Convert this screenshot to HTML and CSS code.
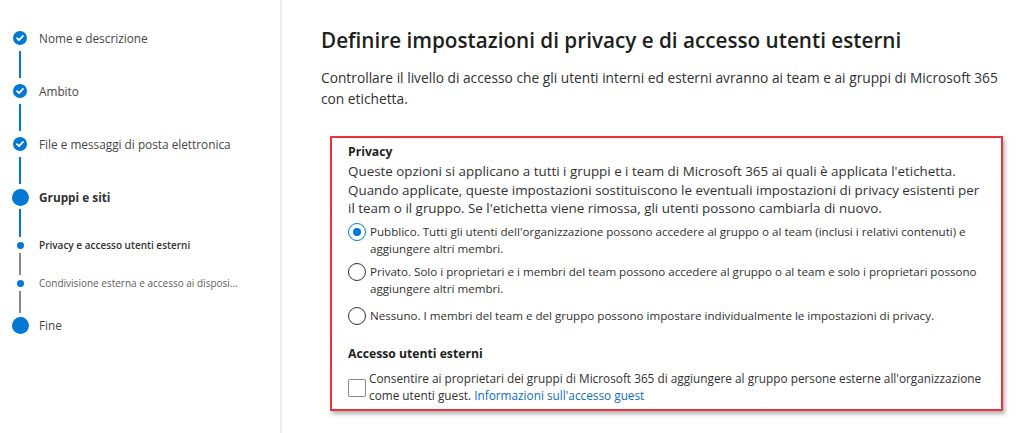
FILE: index.html
```html
<!DOCTYPE html>
<html lang="it">
<head>
    <meta charset="UTF-8">
    <title>Definire impostazioni di privacy e di accesso utenti esterni</title>
    <link rel="stylesheet" href="styles.css">
</head>
<body>
    <div class="page">
        <nav class="wizard">
            <div class="step done">
                <span class="marker"><span class="check-dot"><svg viewBox="0 0 14 14" width="14" height="14"><path d="M4 7.2l2 2 4-4.3" fill="none" stroke="#fff" stroke-width="1.8" stroke-linecap="round" stroke-linejoin="round"/></svg></span></span>
                <span class="label">Nome e descrizione</span>
            </div>
            <div class="line line-lg"></div>
            <div class="step done">
                <span class="marker"><span class="check-dot"><svg viewBox="0 0 14 14" width="14" height="14"><path d="M4 7.2l2 2 4-4.3" fill="none" stroke="#fff" stroke-width="1.8" stroke-linecap="round" stroke-linejoin="round"/></svg></span></span>
                <span class="label">Ambito</span>
            </div>
            <div class="line line-lg"></div>
            <div class="step done">
                <span class="marker"><span class="check-dot"><svg viewBox="0 0 14 14" width="14" height="14"><path d="M4 7.2l2 2 4-4.3" fill="none" stroke="#fff" stroke-width="1.8" stroke-linecap="round" stroke-linejoin="round"/></svg></span></span>
                <span class="label">File e messaggi di posta elettronica</span>
            </div>
            <div class="line line-lg"></div>
            <div class="step current">
                <span class="marker"><span class="big-dot"></span></span>
                <span class="label">Gruppi e siti</span>
            </div>
            <div class="line line-md"></div>
            <div class="step sub current">
                <span class="marker"><span class="small-dot"></span></span>
                <span class="label">Privacy e accesso utenti esterni</span>
            </div>
            <div class="line line-sm gray"></div>
            <div class="step sub">
                <span class="marker"><span class="small-dot"></span></span>
                <span class="label">Condivisione esterna e accesso ai disposi...</span>
            </div>
            <div class="line line-sm gray"></div>
            <div class="step">
                <span class="marker"><span class="big-dot"></span></span>
                <span class="label">Fine</span>
            </div>
        </nav>

        <main class="content">
            <h1>Definire impostazioni di privacy e di accesso utenti esterni</h1>
            <p class="intro">Controllare il livello di accesso che gli utenti interni ed esterni avranno ai team e ai gruppi di Microsoft 365 con etichetta.</p>

            <section class="settings">
                <h2>Privacy</h2>
                <p class="lead">Queste opzioni si applicano a tutti i gruppi e i team di Microsoft 365 ai quali è applicata l'etichetta. Quando applicate, queste impostazioni sostituiscono le eventuali impostazioni di privacy esistenti per il team o il gruppo. Se l'etichetta viene rimossa, gli utenti possono cambiarla di nuovo.</p>

                <label class="option">
                    <span class="radio checked"></span>
                    <span>Pubblico. Tutti gli utenti dell'organizzazione possono accedere al gruppo o al team (inclusi i relativi contenuti) e aggiungere altri membri.</span>
                </label>
                <label class="option">
                    <span class="radio"></span>
                    <span>Privato. Solo i proprietari e i membri del team possono accedere al gruppo o al team e solo i proprietari possono aggiungere altri membri.</span>
                </label>
                <label class="option last">
                    <span class="radio"></span>
                    <span>Nessuno. I membri del team e del gruppo possono impostare individualmente le impostazioni di privacy.</span>
                </label>

                <h2 class="second">Accesso utenti esterni</h2>
                <label class="option check-option">
                    <span class="checkbox"></span>
                    <span class="check-text">Consentire ai proprietari dei gruppi di Microsoft 365 di aggiungere al gruppo persone esterne all'organizzazione come utenti guest. <a href="#">Informazioni sull'accesso guest</a></span>
                </label>
            </section>
        </main>
    </div>
</body>
</html>
```

FILE: styles.css
```css
/* base */
body {
    margin: 0;
    font-family: "Open Sans", "Noto Sans", sans-serif;
    color: #323130;
    background: #fff;
}

.page {
    display: flex;
    height: 433px;
    overflow: hidden;
}

/* wizard on the left */
.wizard {
    width: 280px;
    flex-shrink: 0;
    border-right: 2px solid #eeeeee;
    padding-top: 28px;
    box-sizing: content-box;
}

.step {
    display: flex;
    align-items: center;
    height: 20px;
}

.step.sub {
    height: 12px;
}

.marker {
    width: 38px;
    margin-left: 1px;
    display: flex;
    justify-content: center;
    align-items: center;
}

.check-dot {
    width: 14px;
    height: 14px;
    border-radius: 50%;
    background: #0078d4;
    display: flex;
}

.big-dot {
    width: 17px;
    height: 17px;
    border-radius: 50%;
    background: #0078d4;
}

.small-dot {
    width: 7px;
    height: 7px;
    border-radius: 50%;
    background: #0078d4;
}

.label {
    font-size: 11.8px;
    color: #484644;
    white-space: nowrap;
}

.step.current .label {
    font-weight: 700;
    color: #323130;
}

.step.sub .label {
    font-size: 10px;
    color: #605e5c;
}

.step.sub.current .label {
    font-weight: 600;
    color: #323130;
}

.line {
    width: 2px;
    margin: 3px 0 3px 19px;
    background: #0078d4;
}

.line.gray {
    background: #8a8886;
}

.line-lg { height: 27px; }
.line-md { height: 28px; margin-top: 2px; margin-bottom: 2px; }
.line-sm { height: 22px; margin-top: 2px; margin-bottom: 2px; }

/* main area */
.content {
    flex: 1;
    padding: 26px 21px 0 39px;
}

h1 {
    margin: 0;
    font-size: 20.7px;
    font-weight: 600;
    line-height: 28px;
    color: #201f1e;
}

.intro {
    margin: 13px 0 0;
    font-size: 13.75px;
    line-height: 21px;
    color: #323130;
}

.settings {
    margin: 27px 0 0 9px;
    border: 2px solid #e8333a;
    box-shadow: 2px 3px 4px rgba(0, 0, 0, 0.3);
    padding: 5px 16px 5px 16px;
}

h2 {
    margin: 0;
    font-size: 12.2px;
    font-weight: 700;
    line-height: 18px;
    color: #201f1e;
}

h2.second {
    margin-top: 20px;
}

.lead {
    margin: 1px 0 5px;
    font-size: 13.4px;
    line-height: 18.5px;
}

.option {
    display: flex;
    align-items: flex-start;
    font-size: 11.6px;
    line-height: 17.5px;
    margin-bottom: 5px;
}

.option.last {
    margin-top: 9px;
}

.radio {
    width: 16px;
    height: 16px;
    border: 1px solid #323130;
    border-radius: 50%;
    flex-shrink: 0;
    margin: 0 4px 0 0;
    position: relative;
    box-sizing: content-box;
}

.radio.checked {
    border-color: #0078d4;
}

.radio.checked::after {
    content: "";
    position: absolute;
    left: 4px;
    top: 4px;
    width: 8px;
    height: 8px;
    border-radius: 50%;
    background: #0078d4;
}

.check-option {
    margin: 7px 0 0;
    font-size: 11.8px;
    line-height: 17px;
}

.check-text {
    display: block;
}

.checkbox {
    width: 16px;
    height: 16px;
    border: 1px solid #8a8886;
    border-radius: 2px;
    flex-shrink: 0;
    margin: 9px 3px 0 0;
}

a {
    color: #0f6cbd;
    text-decoration: none;
}
```
